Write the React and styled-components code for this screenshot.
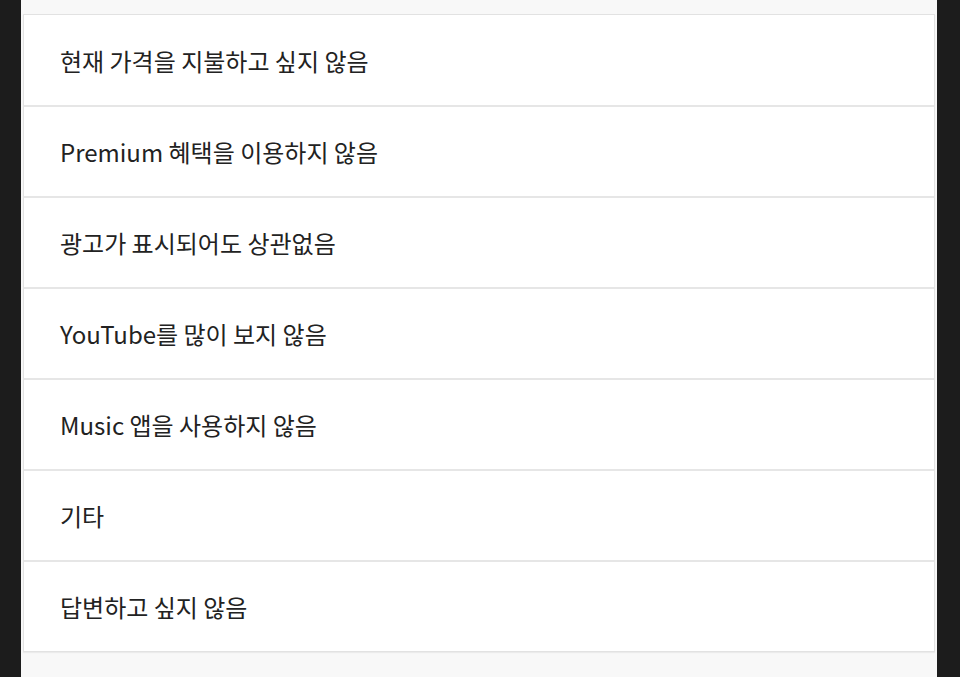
import React from "react";
import styled, { createGlobalStyle } from "styled-components";

const Global = createGlobalStyle`
  html, body { margin: 0; padding: 0; background: #1c1c1c; }
  body { font-family: "Noto Sans CJK KR", "Noto Sans", sans-serif; }
`;

const Page = styled.div`
  margin: 0 23px 0 21px;
  height: 677px;
  background: #f8f8f8;
  padding: 14px 2px 0 2px;
  box-sizing: border-box;
`;

const List = styled.ul`
  list-style: none;
  margin: 0;
  padding: 0;
  background: #fff;
  border: 1px solid #e2e2e2;
  box-shadow: 0 1px 1px rgba(0, 0, 0, 0.05);
`;

const Item = styled.li`
  box-sizing: border-box;
  height: ${(p) => (p.$first ? "90px" : "91px")};
  display: flex;
  align-items: center;
  padding: 0 0 0 36px;
  font-size: 24px;
  color: #222;
  border-top: ${(p) => (p.$first ? "none" : "2px solid #e6e6e6")};
`;

const reasons = [
  "현재 가격을 지불하고 싶지 않음",
  "Premium 혜택을 이용하지 않음",
  "광고가 표시되어도 상관없음",
  "YouTube를 많이 보지 않음",
  "Music 앱을 사용하지 않음",
  "기타",
  "답변하고 싶지 않음",
];

export default function App() {
  return (
    <>
      <Global />
      <Page>
        <List>
          {reasons.map((r, i) => (
            <Item key={r} $first={i === 0}>
              {r}
            </Item>
          ))}
        </List>
      </Page>
    </>
  );
}
